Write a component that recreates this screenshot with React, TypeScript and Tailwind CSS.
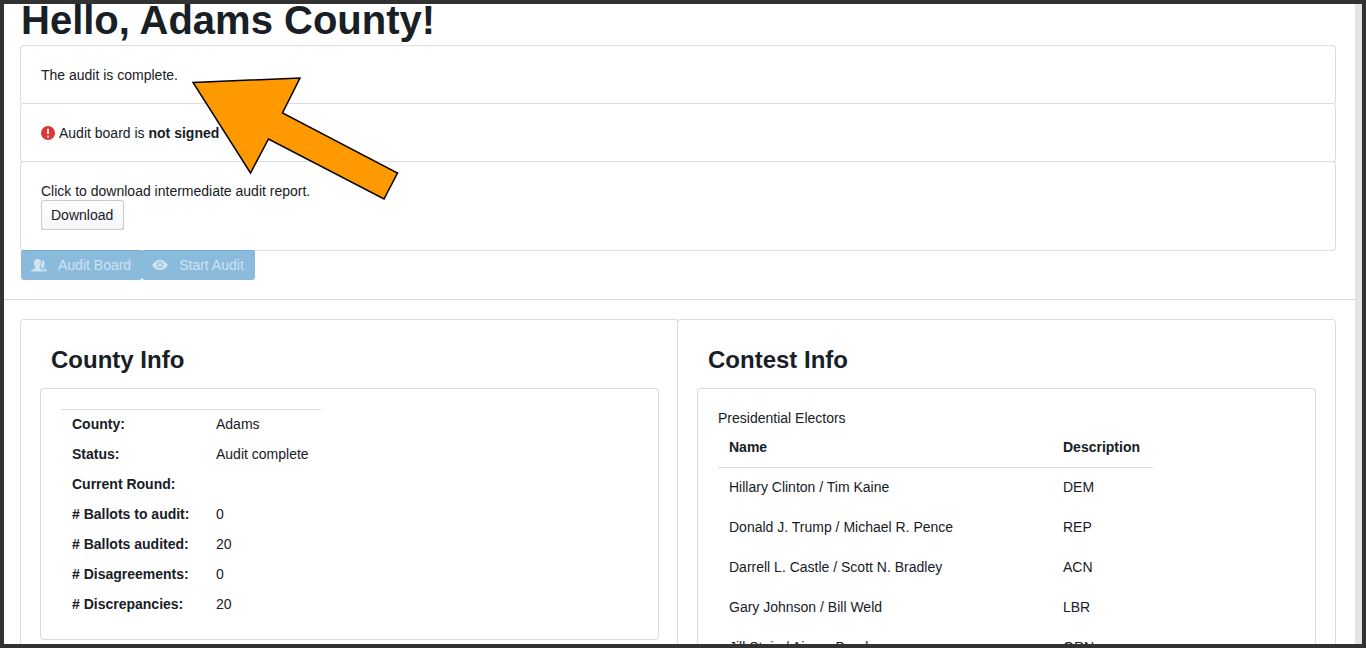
import type { ReactNode } from 'react';

const countyRows: [string, string][] = [
  ['County:', 'Adams'],
  ['Status:', 'Audit complete'],
  ['Current Round:', ''],
  ['# Ballots to audit:', '0'],
  ['# Ballots audited:', '20'],
  ['# Disagreements:', '0'],
  ['# Discrepancies:', '20'],
];

const choices: [string, string][] = [
  ['Hillary Clinton / Tim Kaine', 'DEM'],
  ['Donald J. Trump / Michael R. Pence', 'REP'],
  ['Darrell L. Castle / Scott N. Bradley', 'ACN'],
  ['Gary Johnson / Bill Weld', 'LBR'],
  ['Jill Stein / Ajamu Baraka', 'GRN'],
];

function Card({ children, className = '' }: { children: ReactNode; className?: string }) {
  return (
    <div className={`rounded-[3px] bg-white p-5 shadow-[0_0_0_1px_#dbdcdd] ${className}`}>
      {children}
    </div>
  );
}

function ErrorIcon() {
  return (
    <svg className="size-[14px]" viewBox="0 0 16 16" aria-hidden="true">
      <circle cx="8" cy="8" r="8" fill="#db3737" />
      <path d="M7 3h2v6H7zM7 11h2v2H7z" fill="#fff" />
    </svg>
  );
}

function PeopleIcon() {
  return (
    <svg className="size-4" viewBox="0 0 16 16" fill="currentColor" aria-hidden="true">
      <path d="M10.900 12.600c-.6-.3-2.200-.6-2.200-1.800V9.700c.4-.5.7-1.100.8-1.900.4-.2.600-.9.600-1.400 0-.4-.2-.6-.4-.7.200-.9.100-2-.5-2.700C8.500 2.300 7.500 2 6.400 2 4.500 2 3 2.900 3 5c0 .3 0 .5.100.7-.3.100-.4.400-.4.800 0 .5.200 1.200.6 1.300.1.700.4 1.400.8 1.900v1.100c0 1.100-1.400 1.400-2.200 1.800C.7 13 0 13.400 0 14.500h12.700c0-1.100-.8-1.500-1.800-1.900z" />
      <path d="M14.300 12.100c-.8-.3-1.800-.6-1.800-1.500V9.700c.4-.4.6-.8.7-1.400.3-.1.500-.7.500-1.100 0-.3-.1-.5-.3-.6.200-.4.200-1 .1-1.500C13.300 4 12.300 3.500 11.300 3.500c-.3 0-.6 0-.8.100.200.600.300 1.200.200 1.800.2.300.300.700.200 1.100-.1.600-.3 1-.6 1.300-.1.600-.3 1.100-.6 1.500v.8c0 .5.900.8 1.600 1.100 1.100.5 2 1.100 2.300 3.300H16c0-1.300-.7-2-1.700-2.400z" />
    </svg>
  );
}

function EyeIcon() {
  return (
    <svg className="size-4" viewBox="0 0 16 16" fill="currentColor" aria-hidden="true">
      <path
        fillRule="evenodd"
        d="M8 3C4.700 3 1.700 5 0 8c1.700 3 4.700 5 8 5s6.300-2 8-5c-1.700-3-4.700-5-8-5zm0 8a3 3 0 1 1 0-6 3 3 0 0 1 0 6z"
      />
      <path
        fillRule="evenodd"
        d="M8 6a2 2 0 1 0 0 4 2 2 0 0 0 0-4z"
      />
    </svg>
  );
}

function PrimaryButton({ icon, children }: { icon: ReactNode; children: ReactNode }) {
  return (
    <button
      type="button"
      disabled
      className="flex h-[30px] items-center gap-[11px] rounded-[3px] bg-[#8abbdd] pr-[11px] pl-[10px] text-white/60 shadow-[inset_0_1px_0_#7caccd]"
    >
      {icon}
      {children}
    </button>
  );
}

function Arrow() {
  return (
    <svg
      className="pointer-events-none absolute top-[72px] left-[186px] h-[126px] w-[212px]"
      viewBox="190 76 212 126"
      aria-hidden="true"
    >
      <path
        d="M193 82.500 300 78 282.500 113 397.500 173 384 199 268.500 139 250.500 173Z"
        fill="#ff9900"
        stroke="#000"
        strokeWidth="1.500"
      />
    </svg>
  );
}

export default function App() {
  return (
    <div className="relative flex h-screen overflow-hidden border-4 border-[#333232] bg-white font-['Liberation_Sans',Arial,sans-serif] text-sm leading-[18px] text-[#182026]">
      <main className="min-w-0 flex-1 overflow-hidden">
        <section className="pr-5 pl-[17px]">
          <h1 className="pb-[10px] text-[40px] leading-8 font-bold">Hello, Adams County!</h1>
          <Card>The audit is complete.</Card>
          <Card className="flex items-center gap-1">
            <ErrorIcon />
            <p>
              Audit board is <strong>not signed</strong>
            </p>
          </Card>
          <Card>
            <p>Click to download intermediate audit report.</p>
            <button
              type="button"
              className="block h-[30px] rounded-[3px] bg-linear-to-b from-white to-[#f4f6f8] pr-[11px] pl-[10px] shadow-[inset_0_0_0_1px_#c9cccf,inset_0_-1px_0_#b4b9bd]"
            >
              Download
            </button>
          </Card>
          <div className="relative flex">
            <PrimaryButton icon={<PeopleIcon />}>Audit Board</PrimaryButton>
            <PrimaryButton icon={<EyeIcon />}>Start Audit</PrimaryButton>
          </div>
        </section>

        <hr className="mt-[19px] mb-5 border-[#dbdcdd]" />

        <div className="grid grid-cols-2 pr-5 pl-[17px]">
          <Card>
            <h2 className="px-[10px] pb-[9px] text-2xl leading-10 font-bold">County Info</h2>
            <Card>
              <table className="w-[260px] table-fixed border-collapse text-left">
                <colgroup>
                  <col className="w-36" />
                  <col />
                </colgroup>
                <tbody className="shadow-[inset_0_1px_0_#dbdcdd]">
                  {countyRows.map(([label, value]) => (
                    <tr key={label} className="h-[30px]">
                      <th scope="row" className="px-[11px] font-bold">{label}</th>
                      <td className="px-[11px]">{value}</td>
                    </tr>
                  ))}
                </tbody>
              </table>
            </Card>
          </Card>
          <Card>
            <h2 className="px-[10px] pb-[9px] text-2xl leading-10 font-bold">Contest Info</h2>
            <Card>
              <p>Presidential Electors</p>
              <table className="w-[435px] table-fixed border-collapse text-left">
                <colgroup>
                  <col className="w-[334px]" />
                  <col />
                </colgroup>
                <thead>
                  <tr className="h-10">
                    <th scope="col" className="px-[11px] font-bold">Name</th>
                    <th scope="col" className="px-[11px] font-bold">Description</th>
                  </tr>
                </thead>
                <tbody className="shadow-[inset_0_1px_0_#dbdcdd]">
                  {choices.map(([name, party]) => (
                    <tr key={name} className="h-10">
                      <td className="px-[11px]">{name}</td>
                      <td className="px-[11px]">{party}</td>
                    </tr>
                  ))}
                </tbody>
              </table>
            </Card>
          </Card>
        </div>
      </main>
      <div className="w-[7px] shrink-0 bg-[#e4e4e4]" />
      <Arrow />
    </div>
  );
}
